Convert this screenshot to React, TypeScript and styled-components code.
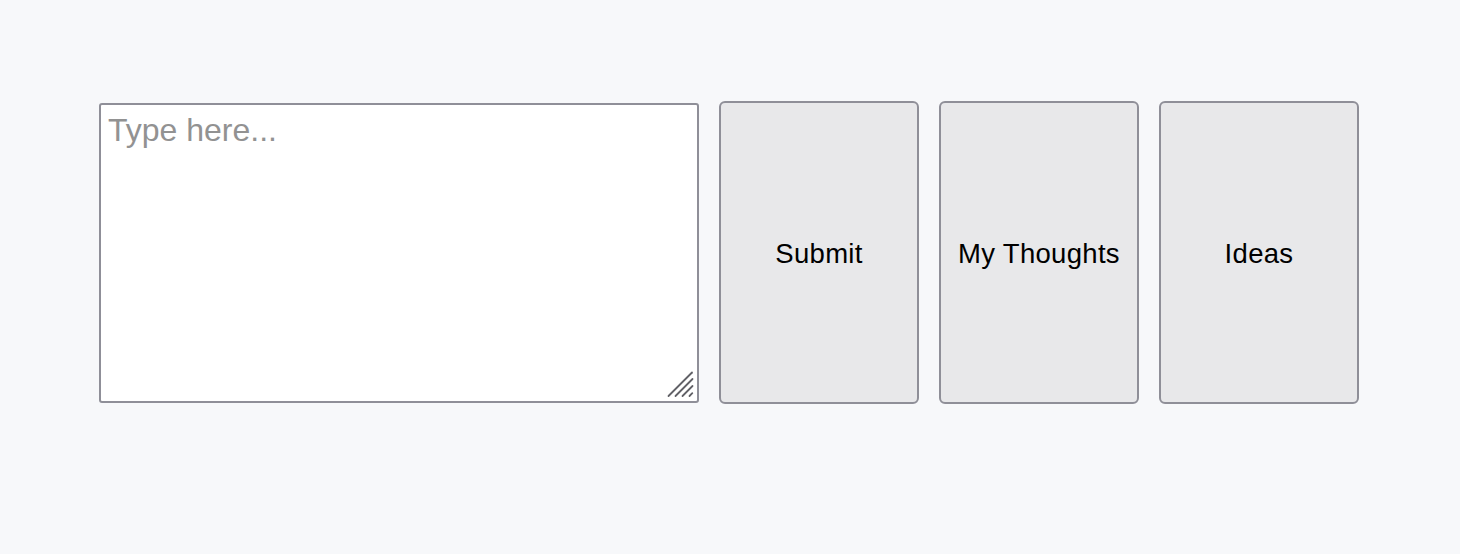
import styled, { createGlobalStyle } from "styled-components";

const GlobalStyle = createGlobalStyle`
  html, body {
    margin: 0;
    padding: 0;
    background: #f7f8fa;
  }
  body {
    font-family: "Liberation Sans", Arial, sans-serif;
  }
`;

/* mac-style resize grip drawn over the textarea corner */
function ResizeGrip() {
  return (
    <Grip width="28" height="28" viewBox="0 0 28 28" aria-hidden="true">
      <g stroke="#606066" strokeWidth="1.8" strokeLinecap="round">
        <line x1="1.5" y1="25" x2="25" y2="1.5" />
        <line x1="8.5" y1="25" x2="25.5" y2="8" />
        <line x1="15.5" y1="25" x2="25.5" y2="15" />
        <line x1="22.5" y1="25" x2="25.3" y2="22.2" />
      </g>
    </Grip>
  );
}

export default function App() {
  return (
    <>
      <GlobalStyle />
      <Page>
        <Row>
          <InputWrap>
            <NoteInput placeholder="Type here..." />
            <ResizeGrip />
          </InputWrap>
          <ActionButton type="button">Submit</ActionButton>
          <ActionButton type="button">My Thoughts</ActionButton>
          <ActionButton type="button">Ideas</ActionButton>
        </Row>
      </Page>
    </>
  );
}

const Page = styled.main`
  min-height: 554px;
  display: flex;
  justify-content: center;
  padding: 101px 2px 0 0;
  box-sizing: border-box;
`;

const Row = styled.div`
  display: flex;
  align-items: center;
  gap: 20px;
  height: 303px;
`;

const InputWrap = styled.div`
  position: relative;
  width: 600px;
  height: 300px;
`;

const NoteInput = styled.textarea`
  display: block;
  box-sizing: border-box;
  width: 600px;
  height: 300px;
  padding: 7px 7px;
  border: 2px solid #8f8f98;
  border-radius: 3px;
  background: #fff;
  font-family: "Liberation Sans", Arial, sans-serif;
  font-size: 32px;
  color: #222;
  outline: none;
  resize: none;

  &::placeholder {
    color: #929292;
  }
`;

const Grip = styled.svg`
  position: absolute;
  right: 4px;
  bottom: 4px;
  pointer-events: none;
`;

const ActionButton = styled.button`
  box-sizing: border-box;
  width: 200px;
  height: 303px;
  padding: 3px 0 0;
  border: 2px solid #8f8f98;
  border-radius: 6px;
  background: #e8e8ea;
  color: #000;
  font-family: "Liberation Sans", Arial, sans-serif;
  font-size: 27.5px;
  letter-spacing: 0.3px;
  cursor: pointer;
`;
